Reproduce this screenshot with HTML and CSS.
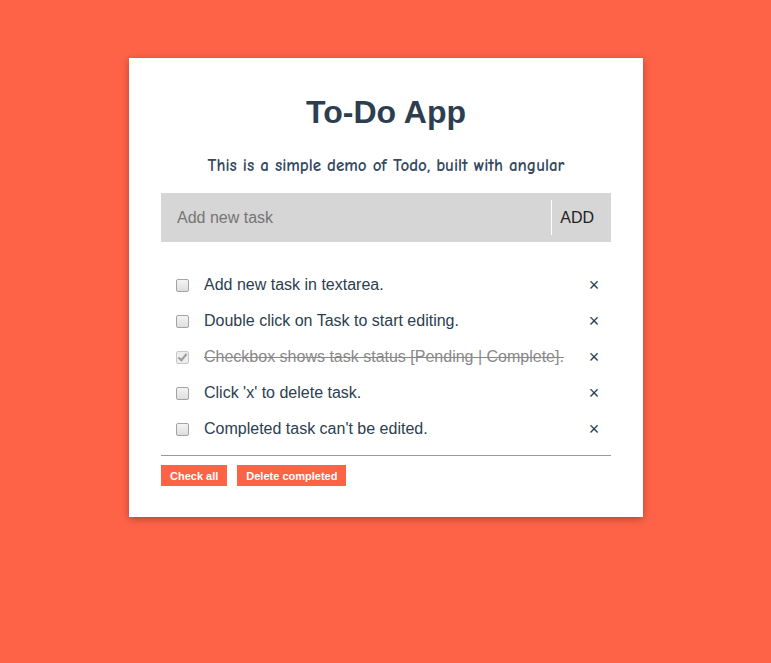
FILE: index.html
```html
<!DOCTYPE html>
<html>
<head>
<meta charset="utf-8">
<link rel="stylesheet" href="styles.css">
</head>
<body>
<div class="card">
  <h1 class="title">To-Do App</h1>
  <p class="subtitle">This is a simple demo of Todo, built with angular</p>
  <div class="add-bar">
    <input class="add-input" type="text" placeholder="Add new task">
    <button class="add-btn">ADD</button>
  </div>
  <ul class="tasks">
    <li class="task"><input type="checkbox" class="task-check"><span class="task-text">Add new task in textarea.</span><span class="task-del">×</span></li>
    <li class="task"><input type="checkbox" class="task-check"><span class="task-text">Double click on Task to start editing.</span><span class="task-del">×</span></li>
    <li class="task done"><input type="checkbox" class="task-check" checked disabled><span class="task-text">Checkbox shows task status [Pending | Complete].</span><span class="task-del">×</span></li>
    <li class="task"><input type="checkbox" class="task-check"><span class="task-text">Click 'x' to delete task.</span><span class="task-del">×</span></li>
    <li class="task"><input type="checkbox" class="task-check"><span class="task-text">Completed task can't be edited.</span><span class="task-del">×</span></li>
  </ul>
  <div class="actions">
    <button class="action-btn">Check all</button>
    <button class="action-btn">Delete completed</button>
  </div>
</div>
</body>
</html>
```
FILE: styles.css
```css
html, body {
  margin: 0;
  padding: 0;
  background: #ff6347;
  height: 100%;
}
body {
  font-family: "Liberation Sans", Arial, sans-serif;
  padding-top: 58px;
  box-sizing: border-box;
}
.card {
  width: 514px;
  box-sizing: border-box;
  margin: 0 0 0 129px;
  background: #fff;
  padding: 34px 32px 31px;
  box-shadow: 0 2px 8px rgba(0, 0, 0, 0.3);
}
.title {
  margin: 0;
  font-size: 32px;
  line-height: 40px;
  font-weight: bold;
  text-align: center;
  color: #2c3e50;
}
.subtitle {
  margin: 24px 0 0;
  font-family: "Comic Sans MS", "Comic Neue", cursive;
  font-size: 17px;
  font-weight: bold;
  line-height: 20px;
  text-align: center;
  color: #34495e;
}
.add-bar {
  margin-top: 17px;
  height: 49px;
  background: #d6d6d6;
  display: flex;
  align-items: center;
}
.add-input {
  flex: 1;
  border: 0;
  background: transparent;
  font-family: "Liberation Sans", Arial, sans-serif;
  font-size: 16px;
  padding: 0 0 0 16px;
  height: 49px;
  outline: none;
  color: #333;
}
.add-input::placeholder {
  color: #757575;
}
.add-btn {
  height: 35px;
  border: 0;
  border-left: 1px solid #fff;
  background: transparent;
  font-family: "Liberation Sans", Arial, sans-serif;
  font-size: 16px;
  color: #222;
  padding: 0 17px 0 8px;
  margin: 0;
}
.tasks {
  list-style: none;
  margin: 25px 0 0;
  padding: 0 0 8px;
  border-bottom: 1px solid #999;
}
.task {
  height: 36px;
  display: flex;
  align-items: center;
  padding-left: 15px;
  font-size: 16px;
  color: #2c3e50;
}
.task-check {
  appearance: none;
  -webkit-appearance: none;
  width: 13px;
  height: 13px;
  margin: 0 15px 0 0;
  border: 1px solid #a3a3a3;
  border-radius: 2px;
  background: linear-gradient(#f4f4f4, #dedede);
  box-sizing: border-box;
  position: relative;
}
.task-check:checked::after {
  content: "";
  position: absolute;
  left: 3px;
  top: 0px;
  width: 3px;
  height: 7px;
  border: solid #9a9a9a;
  border-width: 0 2px 2px 0;
  transform: rotate(40deg);
}
.task-check:disabled {
  border-color: #c8c8c8;
  background: #ededed;
}
.task-text {
  flex: 1;
}
.task.done .task-text {
  text-decoration: line-through;
  color: #888;
}
.task-del {
  width: 12px;
  margin-right: 11px;
  font-size: 18px;
  color: #2c3e50;
  text-align: center;
}
.actions {
  margin-top: 9px;
  display: flex;
  gap: 10px;
}
.action-btn {
  height: 21px;
  border: 0;
  background: #ff6347;
  color: #fff;
  font-family: "Liberation Sans", Arial, sans-serif;
  font-weight: bold;
  font-size: 11px;
  padding: 0 9px;
  margin: 0;
}
```
